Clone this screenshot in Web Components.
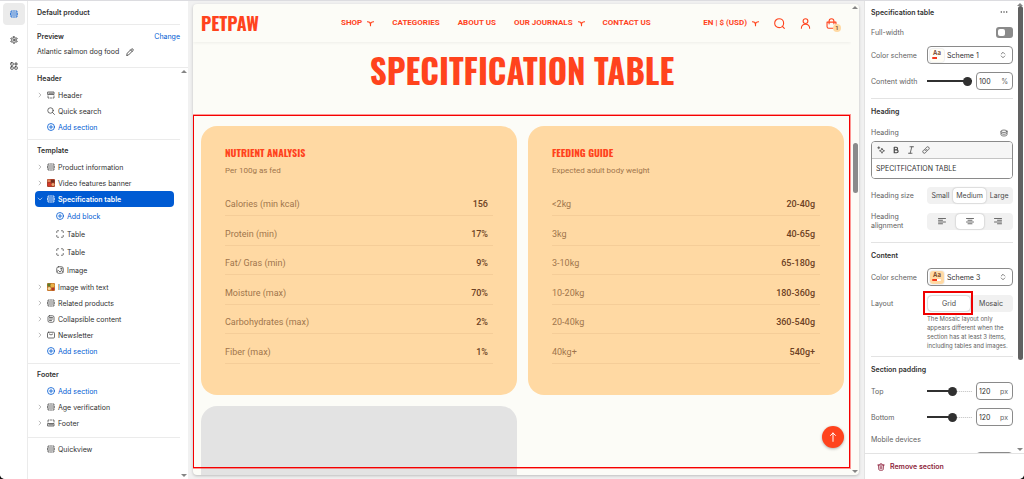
<!DOCTYPE html>
<html lang="en">
<head>
<meta charset="utf-8">
<title>Default product</title>
<style>
  html, body { height: 100%; }
  body {
    margin: 0;
    background: #111;
    color: #303030;
    font: 7px/9px Inter, "Liberation Sans", sans-serif;
    overflow: hidden;
  }
</style>
</head>
<body>
<theme-editor></theme-editor>

<script>
const base = `
<style>
  * { box-sizing: border-box; }
  :host { display: block; box-sizing: border-box; }
  button, input, select { font: inherit; color: inherit; margin: 0; }
  button { border: 0; padding: 0; background: none; cursor: pointer; }
  a { color: inherit; text-decoration: none; }
  h1, h2, h3, p { margin: 0; font-size: inherit; }
</style>`;

const define = (name, html, setup) => {
  const template = document.createElement("template");
  template.innerHTML = base + html;

  customElements.define(
    name,
    class extends HTMLElement {
      constructor() {
        super();
        this.attachShadow({ mode: "open" });
        this.shadowRoot.appendChild(template.content.cloneNode(true));
      }

      connectedCallback() {
        if (setup) setup(this, this.shadowRoot);
      }
    }
  );
};

// 16x16 outlines, drawn with currentColor
const icons = {
  section: `<path d="M2 4V2h2.500M6.500 2h3M11.500 2H14v2M1.500 6h13v4h-13zM2 12v2h2.500M6.500 14h3M11.500 14H14v-2"/>`,
  header: `<path d="M2 2h12v5H2zM4 4.500h8M2 10v1M2 13v1h2M7 14h2M12 14h2v-1M14 11v-1"/>`,
  footer: `<path d="M2 9h12v5H2zM4 11.500h8M2 6V5M2 3V2h2M7 2h2M12 2h2v1M14 5v1"/>`,
  search: `<circle cx="7" cy="7" r="5.500"/><path d="M11 11l4 4"/>`,
  add: `<circle cx="8" cy="8" r="7"/><path d="M8 4.500v7M4.500 8h7"/>`,
  block: `<path d="M1.500 5V3A1.500 1.500 0 0 1 3 1.500H5M11 1.500h2A1.500 1.500 0 0 1 14.500 3V5M14.500 11v2a1.500 1.500 0 0 1-1.500 1.500H11M5 14.500H3A1.500 1.500 0 0 1 1.500 13V11"/>`,
  image: `<rect x="1.500" y="1.500" width="13" height="13" rx="3.500"/><path d="M2 11l3-2 3 3 2.500-3L14 11.500"/><circle cx="10.500" cy="5.500" r="1.200"/>`,
  doc: `<rect x="2" y="1.500" width="12" height="13" rx="3"/><path d="M5 5h6M5 8h6M5 11h4"/>`,
  mail: `<rect x="1" y="2.500" width="14" height="11.500" rx="2"/><path d="M4.500 6L8 8l3.500-2"/>`,
  right: `<path d="M5.500 3l5 5-5 5"/>`,
  down: `<path d="M3 5.500l5 5 5-5"/>`,
  gear: `<path d="M6.800 1.500h2.400l.5 2 1.600.9 2-.6 1.200 2.100-1.500 1.400v1.400l1.500 1.400-1.200 2.100-2-.6-1.600.9-.5 2H6.800l-.5-2-1.600-.9-2 .6-1.200-2.100L3 8.700V7.300L1.500 5.900l1.200-2.100 2 .6 1.600-.9z"/><circle cx="8" cy="8" r="2.200"/>`,
  apps: `<rect x="1.500" y="1.500" width="5" height="5" rx="1"/><rect x="1.500" y="9.500" width="5" height="5" rx="1"/><rect x="9.500" y="9.500" width="5" height="5" rx="1"/><path d="M12 1v6M9 4h6"/>`,
  pencil: `<path d="M1.500 14.500l1-4L10.800 2.200a2 2 0 0 1 3 3L5.500 13.500z M9.300 4l2.700 2.700"/>`,
  dots: `<path d="M2.500 8h.1M8 8h.1M13.400 8h.1" stroke-width="2.600"/>`,
  data: `<ellipse cx="8" cy="4.500" rx="6" ry="2.500"/><path d="M2 4.500v7C2 13 4.700 14 8 14s6-1 6-2.500v-7M2 8c0 1.500 2.700 2.500 6 2.500S14 9.500 14 8"/>`,
  updown: `<path d="M4.500 6L8 2.500 11.500 6M4.500 10L8 13.500 11.500 10"/>`,
  magic: `<path d="M10 5l1.500 3L15 9.500 11.500 11 10 14.500 8.500 11 5 9.500 8.500 8zM3.500 1.500v4M1.500 3.500h4"/>`,
  bold: `<path d="M4.500 2.500h4a2.600 2.600 0 0 1 0 5.200h-4zM4.500 7.700h4.800a2.900 2.900 0 0 1 0 5.800H4.500z" stroke-width="2.400"/>`,
  italic: `<path d="M6 1.500h7M3 14.500h7M9.700 1.500L6.300 14.500"/>`,
  link: `<path d="M6.500 9.500a3 3 0 0 1 0-4l2.700-3a3 3 0 0 1 4.300 4.300L11.500 8.800M9.500 6.500a3 3 0 0 1 0 4l-2.700 3a3 3 0 0 1-4.300-4.300l2-2"/>`,
  alignleft: `<path d="M1 3h14M1 6.500h8M1 10h14M1 13.500h8"/>`,
  aligncenter: `<path d="M1 3h14M4 6.500h8M1 10h14M4 13.500h8"/>`,
  alignright: `<path d="M1 3h14M7 6.500h8M1 10h14M7 13.500h8"/>`,
  trash: `<path d="M1.500 4h13M5.500 4V3a1.500 1.500 0 0 1 1.500-1.500h2A1.500 1.500 0 0 1 10.500 3v1M3 4l.5 8.500a2 2 0 0 0 2 2h5a2 2 0 0 0 2-2L13 4M6.500 7v4.500M9.500 7v4.500"/>`,
  branch: `<path d="M1 4c4 0 7 2 7 6 0-4 3-6 7-6M8 9v4" stroke-width="2.600"/>`,
  glass: `<circle cx="7.500" cy="7.500" r="6.500"/><path d="M12 12l3 3"/>`,
  user: `<circle cx="8" cy="4.500" r="3.500"/><path d="M2 15c0-8 12-8 12 0"/>`,
  bag: `<path d="M1.500 6h13v6.500a2.500 2.500 0 0 1-2.500 2.500H4a2.500 2.500 0 0 1-2.500-2.500zM4.500 8.500V4.500a3.500 3.500 0 0 1 7 0v4"/>`,
  arrow: `<path d="M8 15V1.500M4 5.500l4-4 4 4"/>`,
  photo1: `<g stroke="none"><rect width="16" height="16" rx="2" fill="#a8402a"/><rect x="1" y="1" width="6" height="5" fill="#e0825a"/><rect x="8" y="2" width="7" height="5" fill="#6e2c1e"/><circle cx="5" cy="11" r="3.500" fill="#d8382a"/><circle cx="12" cy="11" r="3" fill="#e9a673"/></g>`,
  photo2: `<g stroke="none"><rect width="16" height="16" rx="2" fill="#c8792c"/><rect x="1" y="1" width="6" height="6" fill="#5d7d2d"/><circle cx="11" cy="5" r="4" fill="#e8b24a"/><circle cx="4.500" cy="11" r="3" fill="#f0d9a0"/><circle cx="12" cy="12" r="3" fill="#b5352a"/></g>`,
};

define("ui-icon", `
<style>
  :host { flex: none; width: var(--size, 8px); height: var(--size, 8px); }
  svg { display: block; width: 100%; height: 100%; }
</style>
<svg viewBox="0 0 16 16" fill="none" stroke="currentColor" stroke-width="1.600" stroke-linecap="round" stroke-linejoin="round" aria-hidden="true"></svg>
`, (el, root) => {
  root.querySelector("svg").innerHTML = icons[el.getAttribute("name")] || "";
});

define("scroll-rail", `
<style>
  :host { display: flex; flex-direction: column; align-items: center; width: 8px; padding: 2px 0; flex: none; }
  i { border: 3px solid transparent; border-top-width: 0; border-bottom-color: #858585; }
  i:last-child { border-width: 3px 3px 0; border-color: #858585 transparent transparent; }
  span { flex: 1; display: flex; flex-direction: column; }
  b { width: 5px; border-radius: 3px; background: var(--thumb, transparent); flex: 0 0 var(--length, 0%); }
  u { flex: 0 0 var(--before, 0%); }
</style>
<i></i><span><u></u><b></b></span><i></i>
`);

define("tree-row", `
<style>
  :host { padding: 0 6px 0 7px; }
  a { display: flex; align-items: center; height: 16px; padding-left: 2px; border-radius: 4px; }
  a ui-icon + ui-icon { margin: 0 3px 0 4px; }
  ui-icon { color: #4a4a4a; }
  .chevron { --size: 6px; color: #8a8a8a; }
  :host([leaf]) .chevron { visibility: hidden; }
  :host([block]) a { height: 18px; padding-left: 11px; }
  :host([add]) a, :host([add]) ui-icon { color: #005bd3; }
  :host([selected]) a { background: #005bd3; color: #fff; font-weight: 600; }
  :host([selected]) ui-icon { color: #fff; }
</style>
<a href="#"><ui-icon class="chevron" name="right"></ui-icon><ui-icon class="icon"></ui-icon><slot></slot></a>
`, (el, root) => {
  root.querySelector(".icon").setAttribute("name", el.getAttribute("icon"));
  root.querySelector(".icon").connectedCallback();
  if (el.hasAttribute("selected")) {
    root.querySelector(".chevron").setAttribute("name", "down");
    root.querySelector(".chevron").connectedCallback();
  }
});

define("tree-group", `
<style>
  :host { padding: 3px 0 4px; border-bottom: 1px solid #ebebeb; }
  :host([last]) { padding-bottom: 6px; }
  h2 { padding-left: 9px; line-height: 16px; font-weight: 600; }
</style>
<h2></h2><slot></slot>
`, (el, root) => {
  root.querySelector("h2").textContent = el.getAttribute("heading");
});

define("editor-rail", `
<style>
  :host { background: #fff; border-right: 1px solid #ebebeb; padding: 2px 2px 2px 3px; }
  nav { display: flex; flex-direction: column; gap: 4px; }
  button { display: grid; place-items: center; height: 22px; border-radius: 4px; color: #303030; }
  button[aria-pressed] { background: #ebebeb; color: #005bd3; }
</style>
<nav>
  <button aria-label="Sections" aria-pressed="true"><ui-icon name="section"></ui-icon></button>
  <button aria-label="Theme settings"><ui-icon name="gear"></ui-icon></button>
  <button aria-label="App embeds"><ui-icon name="apps"></ui-icon></button>
</nav>
`);

define("section-tree", `
<style>
  :host { display: flex; flex-direction: column; background: #fff; min-height: 0; }
  header { padding: 0 8px 0 9px; height: 67px; border-bottom: 1px solid #ebebeb; flex: none; }
  h1 { font-size: 7px; font-weight: 600; line-height: 23px; border-bottom: 1px solid #ebebeb; }
  header div { display: flex; align-items: center; }
  h2 { flex: 1; font-weight: 600; }
  .preview { padding-top: 7px; }
  .product { gap: 7px; padding-top: 6px; }
  a { color: #005bd3; }
  .scroll { flex: 1; display: flex; min-height: 0; }
  .list { flex: 1; overflow: hidden; }
  .loose { padding-top: 3px; }
</style>
<header>
  <h1>Default product</h1>
  <div class="preview"><h2>Preview</h2><a href="#">Change</a></div>
  <div class="product"><span>Atlantic salmon dog food</span><button aria-label="Edit"><ui-icon name="pencil"></ui-icon></button></div>
</header>
<div class="scroll">
  <div class="list">
    <tree-group heading="Header">
      <tree-row icon="header">Header</tree-row>
      <tree-row icon="search" leaf>Quick search</tree-row>
      <tree-row icon="add" leaf add>Add section</tree-row>
    </tree-group>
    <tree-group heading="Template">
      <tree-row icon="section">Product information</tree-row>
      <tree-row icon="photo1">Video features banner</tree-row>
      <tree-row icon="section" selected>Specification table</tree-row>
      <tree-row icon="add" leaf add block>Add block</tree-row>
      <tree-row icon="block" leaf block>Table</tree-row>
      <tree-row icon="block" leaf block>Table</tree-row>
      <tree-row icon="image" leaf block>Image</tree-row>
      <tree-row icon="photo2">Image with text</tree-row>
      <tree-row icon="section">Related products</tree-row>
      <tree-row icon="doc">Collapsible content</tree-row>
      <tree-row icon="mail">Newsletter</tree-row>
      <tree-row icon="add" leaf add>Add section</tree-row>
    </tree-group>
    <tree-group heading="Footer" last>
      <tree-row icon="add" leaf add>Add section</tree-row>
      <tree-row icon="section">Age verification</tree-row>
      <tree-row icon="footer">Footer</tree-row>
    </tree-group>
    <tree-row class="loose" icon="section" leaf>Quickview</tree-row>
  </div>
  <scroll-rail></scroll-rail>
</div>
`);

define("store-header", `
<style>
  :host {
    display: grid; grid-template-columns: 140px auto 1fr; align-items: center;
    height: 38px; padding: 0 14px 0 8px; color: #ff431d;
    font: 700 8px/10px Roboto, sans-serif; box-shadow: 0 1px 3px rgba(0, 0, 0, .06);
  }
  .logo { font: 700 18px/20px Oswald, "Roboto Condensed", "Liberation Sans Narrow", "Liberation Sans", sans-serif; }
  nav, .tools { display: flex; align-items: center; gap: 18px; white-space: nowrap; }
  nav a, .locale { display: flex; align-items: center; gap: 5px; }
  .tools { justify-content: flex-end; gap: 15px; }
  ui-icon { --size: 7px; }
  .tools .large { --size: 11px; }
  .bag { position: relative; }
  .bag span {
    position: absolute; right: -4px; bottom: -3px; width: 8px; height: 8px; border-radius: 50%;
    background: #ffd9a3; color: #6d3a1c; font: 500 6px/8px Roboto, sans-serif; text-align: center;
  }
</style>
<a class="logo" href="#">PETPAW</a>
<nav>
  <a href="#">SHOP <ui-icon name="branch"></ui-icon></a>
  <a href="#">CATEGORIES</a>
  <a href="#">ABOUT US</a>
  <a href="#">OUR JOURNALS <ui-icon name="branch"></ui-icon></a>
  <a href="#">CONTACT US</a>
</nav>
<div class="tools">
  <button class="locale">EN | $ (USD) <ui-icon name="branch"></ui-icon></button>
  <button aria-label="Search"><ui-icon class="large" name="glass"></ui-icon></button>
  <button aria-label="Account"><ui-icon class="large" name="user"></ui-icon></button>
  <button class="bag" aria-label="Cart"><ui-icon class="large" name="bag"></ui-icon><span>1</span></button>
</div>
`);

define("spec-card", `
<style>
  :host { background: #ffd9a3; border-radius: 16px; padding: 20px 24px 31px; color: #6d4123; }
  h3 { color: #ff431d; font: 700 10px/14px Oswald, "Roboto Condensed", "Liberation Sans Narrow", "Liberation Sans", sans-serif; }
  p { margin: 5px 0 10px; font-size: 8px; line-height: 12px; color: #a0754c; }
  table { width: 100%; height: 177px; border-collapse: collapse; font-size: 9px; line-height: 12px; }
  th, td { border-bottom: 1px solid #f5cd98; padding: 11px 0 5px; }
  th { text-align: left; font-weight: 400; color: #a0754c; }
  td { text-align: right; padding-right: 5px; font-weight: 500; }
</style>
<h3></h3><p></p><table><tbody></tbody></table>
`, (el, root) => {
  root.querySelector("h3").textContent = el.getAttribute("heading");
  root.querySelector("p").textContent = el.getAttribute("note");
  root.querySelector("table").setAttribute("aria-label", el.getAttribute("heading"));
  const body = root.querySelector("tbody");
  body.replaceChildren();
  for (const [name, value] of JSON.parse(el.getAttribute("rows"))) {
    const row = body.insertRow();
    const th = document.createElement("th");
    th.scope = "row";
    th.textContent = name;
    row.append(th);
    row.insertCell().textContent = value;
  }
});

define("store-preview", `
<style>
  :host { display: flex; margin: 3px 5px 4px; border-radius: 4px; overflow: hidden; background: #fcfcf7; box-shadow: 0 1px 3px rgba(0, 0, 0, .22); font-family: Roboto, sans-serif; min-width: 0; position: relative; }
  .page { flex: 1; min-width: 0; overflow: hidden; }
  h2 { margin: 8px 0 34px; text-align: center; color: #ff431d; font: 700 33px/42px Oswald, "Roboto Condensed", "Liberation Sans Narrow", "Liberation Sans", sans-serif; }
  .cards { display: grid; grid-template-columns: 1fr 1fr; gap: 11px; padding: 0 7px 0 8px; }
  .placeholder { height: 269px; border-radius: 16px; background: #e3e3e3; }
  .outline { position: absolute; inset: 111px 9px 7px 0; border: 1px solid #f50000; outline: 1px solid rgba(255, 0, 0, .4); pointer-events: none; }
  .top { position: absolute; right: 15px; bottom: 27px; width: 22px; height: 22px; border-radius: 50%; background: #ff431d; color: #fff; display: grid; place-items: center; box-shadow: 0 1px 3px rgba(0, 0, 0, .3); }
  .top ui-icon { --size: 10px; }
  scroll-rail { --thumb: #8b8b8b; --before: 29%; --length: 11%; }
</style>
<div class="page">
  <store-header></store-header>
  <h2>SPECITFICATION TABLE</h2>
  <div class="cards">
    <spec-card heading="NUTRIENT ANALYSIS" note="Per 100g as fed"
      rows='[["Calories (min kcal)","156"],["Protein (min)","17%"],["Fat/ Gras (min)","9%"],["Moisture (max)","70%"],["Carbohydrates (max)","2%"],["Fiber (max)","1%"]]'></spec-card>
    <spec-card heading="FEEDING GUIDE" note="Expected adult body weight"
      rows='[["&lt;2kg","20-40g"],["3kg","40-65g"],["3-10kg","65-180g"],["10-20kg","180-360g"],["20-40kg","360-540g"],["40kg+","540g+"]]'></spec-card>
    <div class="placeholder"></div>
  </div>
</div>
<scroll-rail></scroll-rail>
<div class="outline"></div>
<button class="top" aria-label="Back to top"><ui-icon name="arrow"></ui-icon></button>
`);

define("scheme-select", `
<style>
  :host { display: flex; align-items: center; height: 18px; padding: 0 5px 0 2px; border: 1px solid #8a8a8a; border-radius: 4px; background: #fff; }
  .swatch { width: 14px; height: 13px; border-radius: 3px; background: var(--scheme, #fffdf5); box-shadow: 0 0 0 1px rgba(0, 0, 0, .06); font-weight: 600; color: #6d3a1c; font-size: 6px; line-height: 8px; text-align: center; }
  .swatch i { display: block; width: 9px; height: 2px; margin: 0 2px; border-radius: 1px; background: linear-gradient(90deg, #f5391a 50%, #fff 50%); }
  select { flex: 1; min-width: 0; appearance: none; border: 0; background: none; padding: 0 0 0 3px; }
  ui-icon { color: #616161; }
</style>
<span class="swatch" aria-hidden="true">Aa<i></i></span>
<select aria-label="Color scheme"><option></option></select>
<ui-icon name="updown"></ui-icon>
`, (el, root) => {
  root.querySelector("option").textContent = el.getAttribute("value");
});

define("range-field", `
<style>
  :host { display: flex; align-items: center; gap: 4px; }
  [type=range] {
    appearance: none; flex: 1; min-width: 0; height: 9px; background:
      linear-gradient(#303030, #303030) left center / var(--fill) 2px no-repeat,
      repeating-linear-gradient(90deg, #ccc 0 1px, #f1f1f1 1px 2px) center / 100% 1px no-repeat;
  }
  [type=range]::-webkit-slider-thumb { appearance: none; width: 9px; height: 9px; border-radius: 50%; background: #303030; }
  .box { display: flex; align-items: center; width: 37px; height: 18px; padding: 0 4px 0 2px; border: 1px solid #8a8a8a; border-radius: 4px; background: #fff; color: #616161; }
  .box input { flex: 1; min-width: 0; width: 0; border: 0; padding: 0; background: none; color: #303030; }
</style>
<input type="range" min="0" max="100"><label class="box"><input type="text"><span></span></label>
`, (el, root) => {
  const [range, text] = root.querySelectorAll("input");
  const label = el.getAttribute("label");
  range.value = el.getAttribute("at");
  range.style.setProperty("--fill", el.getAttribute("at") + "%");
  range.setAttribute("aria-label", label);
  text.setAttribute("aria-label", label);
  text.value = el.getAttribute("value");
  root.querySelector("span").textContent = el.getAttribute("unit");
});

define("segment-group", `
<style>
  :host { display: flex; height: 17px; padding: 1px; border-radius: 4px; background: #f1f1f1; }
  ::slotted(button) { flex: var(--grow, 1 1 auto); display: grid; place-items: center; }
</style>
<slot></slot>
`);

define("setting-row", `
<style>
  :host { display: flex; align-items: center; min-height: 18px; margin-bottom: var(--gap, 8px); }
  span { flex: 0 0 56px; color: #616161; }
  div { flex: 1; min-width: 0; }
  :host([end]) div { display: flex; justify-content: flex-end; }
</style>
<span></span><div><slot></slot></div>
`, (el, root) => {
  root.querySelector("span").textContent = el.getAttribute("label");
});

define("section-settings", `
<style>
  :host { display: flex; flex-direction: column; background: #fff; border-left: 1px solid #e3e3e3; min-height: 0; }
  .scroll { flex: 1; display: flex; min-height: 0; }
  .fields { flex: 1; min-width: 0; padding: 0 3px 0 6px; overflow: hidden; }
  header { display: flex; align-items: center; justify-content: space-between; height: 22px; padding-right: 5px; font-weight: 600; }
  h2, h3 { font-weight: 600; }
  section { border-bottom: 1px solid #e3e3e3; }
  section h3 { line-height: 25px; }
  section:last-child { border: 0; }
  .switch { appearance: none; width: 17px; height: 11px; border-radius: 3px; background: #8a8a8a; display: flex; align-items: center; padding: 2px; }
  .switch::before { content: ""; width: 7px; height: 7px; border-radius: 2px; background: #fff; }
  .label { display: flex; justify-content: space-between; align-items: center; height: 17px; padding-right: 5px; color: #616161; }
  .editor { border: 1px solid #8a8a8a; border-radius: 4px; overflow: hidden; margin-bottom: 7px; }
  .toolbar { display: flex; gap: 7px; padding: 4px 5px; background: #f6f6f6; border-bottom: 1px solid #c4c4c4; color: #4a4a4a; }
  .editor input { display: block; width: 100%; height: 19px; border: 0; padding: 0 4px; }
  segment-group button { padding: 0 3px; border-radius: 4px; color: #4a4a4a; }
  segment-group button[aria-pressed="true"] { background: #fff; box-shadow: 0 0 2px rgba(0, 0, 0, .3); }
  .help { margin: 0 0 6px 56px; padding-top: 2px; font-size: 6px; color: #616161; }
  .layout { position: relative; }
  .mark { position: absolute; inset: -4px 40px -3px -4px; border: 2px solid #ef0000; pointer-events: none; }
  scroll-rail { --thumb: #616161; --length: 80%; }
  footer { height: 26px; border-top: 1px solid #e3e3e3; padding: 0 12px; display: flex; align-items: center; flex: none; }
  footer button { display: flex; align-items: center; gap: 5px; color: #8e1f3b; font-weight: 600; }
</style>
<div class="scroll">
  <div class="fields">
    <section>
      <header><h2>Specification table</h2><button aria-label="More actions"><ui-icon name="dots"></ui-icon></button></header>
      <setting-row label="Full-width" end style="--gap: 5px"><input class="switch" type="checkbox" role="switch" aria-label="Full-width"></setting-row>
      <setting-row label="Color scheme"><scheme-select value="Scheme 1"></scheme-select></setting-row>
      <setting-row label="Content width"><range-field label="Content width" at="100" value="100" unit="%"></range-field></setting-row>
    </section>
    <section>
      <h3>Heading</h3>
      <div class="label"><label for="heading">Heading</label><ui-icon name="data"></ui-icon></div>
      <div class="editor">
        <div class="toolbar">
          <button aria-label="Generate"><ui-icon name="magic"></ui-icon></button>
          <button aria-label="Bold"><ui-icon name="bold"></ui-icon></button>
          <button aria-label="Italic"><ui-icon name="italic"></ui-icon></button>
          <button aria-label="Link"><ui-icon name="link"></ui-icon></button>
        </div>
        <input id="heading" type="text" value="SPECITFICATION TABLE">
      </div>
      <setting-row label="Heading size">
        <segment-group><button>Small</button><button aria-pressed="true">Medium</button><button>Large</button></segment-group>
      </setting-row>
      <setting-row label="Heading alignment" style="--gap: 12px">
        <segment-group style="--grow: 1 1 0">
          <button aria-label="Left"><ui-icon name="alignleft"></ui-icon></button>
          <button aria-label="Center" aria-pressed="true"><ui-icon name="aligncenter"></ui-icon></button>
          <button aria-label="Right"><ui-icon name="alignright"></ui-icon></button>
        </segment-group>
      </setting-row>
    </section>
    <section>
      <h3>Content</h3>
      <setting-row label="Color scheme"><scheme-select value="Scheme 3" style="--scheme: #ffd9a3"></scheme-select></setting-row>
      <setting-row label="Layout" style="--gap: 0px">
        <div class="layout">
          <segment-group style="--grow: 1 1 0"><button aria-pressed="true">Grid</button><button>Mosaic</button></segment-group>
          <div class="mark"></div>
        </div>
      </setting-row>
      <p class="help">The Mosaic layout only appears different when the section has at least 3 items, including tables and images.</p>
    </section>
    <section>
      <h3>Section padding</h3>
      <setting-row label="Top"><range-field label="Top" at="58" value="120" unit="px"></range-field></setting-row>
      <setting-row label="Bottom" style="--gap: 4px"><range-field label="Bottom" at="58" value="120" unit="px"></range-field></setting-row>
      <setting-row label="Mobile devices" style="--gap: 4px"></setting-row>
      <setting-row label=""><range-field label="Mobile top" at="58" value="" unit=""></range-field></setting-row>
    </section>
  </div>
  <scroll-rail></scroll-rail>
</div>
<footer><button><ui-icon name="trash"></ui-icon>Remove section</button></footer>
`);

define("theme-editor", `
<style>
  :host {
    display: grid; grid-template-columns: 28px 160px minmax(0, 1fr) 160px; grid-template-rows: minmax(0, 1fr);
    height: 100vh; overflow: hidden; background: #f1f1f1; border-top: 1px solid #dcdce0;
    border-radius: 0 0 5px 5px;
  }
</style>
<editor-rail></editor-rail>
<section-tree></section-tree>
<store-preview></store-preview>
<section-settings></section-settings>
`);
</script>
</body>
</html>
